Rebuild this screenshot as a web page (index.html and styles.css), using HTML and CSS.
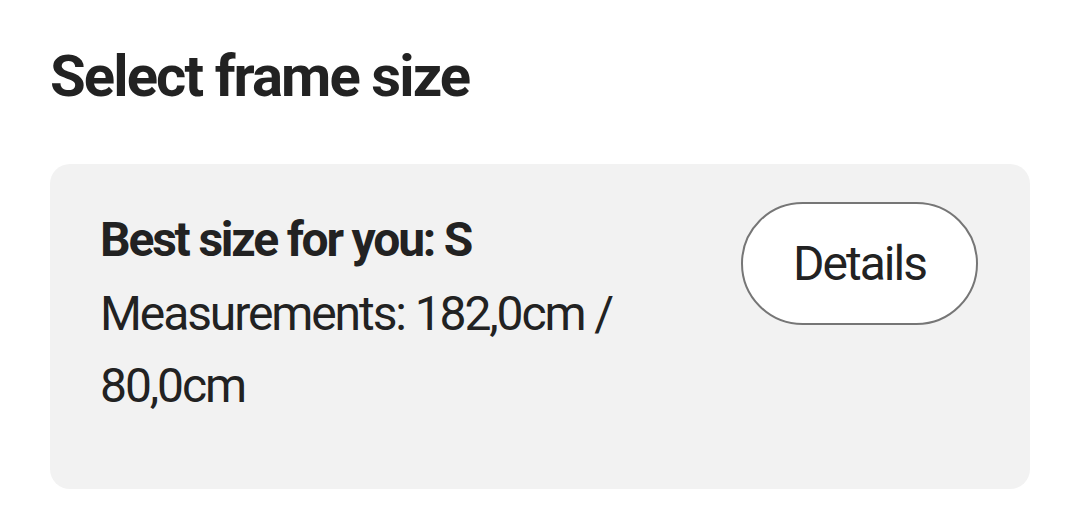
FILE: index.html
```html
<!DOCTYPE html>
<html lang="en">
<head>
<meta charset="utf-8">
<title>Select frame size</title>
<link rel="stylesheet" href="styles.css">
</head>
<body>
<main class="page">
  <h1 class="title">Select frame size</h1>
  <section class="card">
    <div class="info">
      <p class="best">Best size for you: S</p>
      <p class="measure">Measurements: 182,0cm /<br>80,0cm</p>
    </div>
    <button class="details" type="button">Details</button>
  </section>
</main>
</body>
</html>
```

FILE: styles.css
```css
html, body {
  margin: 0;
  padding: 0;
  background: #ffffff;
}

body {
  font-family: Roboto, "Liberation Sans", sans-serif;
  color: #222222;
}

.page {
  padding: 36px 50px 0 50px;
}

.title {
  margin: 0;
  font-size: 58px;
  line-height: 80px;
  font-weight: 700;
  letter-spacing: -1.9px;
}

.card {
  margin-top: 48px;
  background: #f2f2f2;
  border-radius: 20px;
  width: 980px;
  box-sizing: border-box;
  padding: 38px 52px 67px 50px;
  display: flex;
  justify-content: space-between;
  align-items: flex-start;
}

.info p {
  margin: 0;
}

.best {
  font-size: 48px;
  line-height: 76px;
  font-weight: 700;
  letter-spacing: -2.2px;
}

.measure {
  font-size: 48px;
  line-height: 72px;
  font-weight: 400;
  letter-spacing: -2.1px;
  margin-top: 2px;
}

.details {
  font-family: inherit;
  font-size: 48px;
  font-weight: 400;
  color: #222222;
  background: #ffffff;
  border: 2px solid #767676;
  border-radius: 62px;
  width: 237px;
  height: 123px;
  padding: 0;
  letter-spacing: -2px;
  cursor: pointer;
}
```
